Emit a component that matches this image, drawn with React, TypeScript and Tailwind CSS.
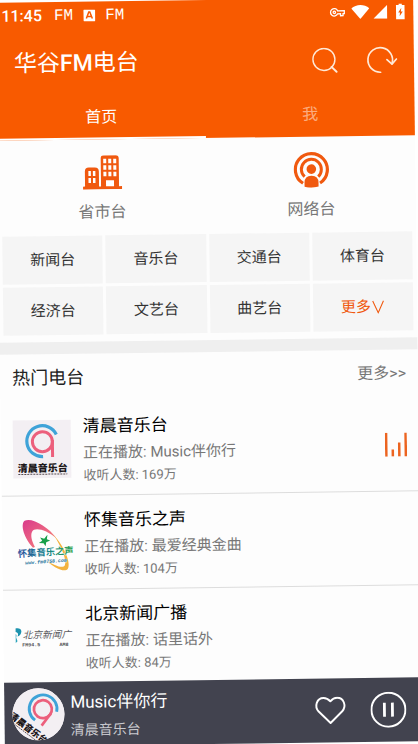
import { useState } from "react";

const CATEGORIES = ["新闻台", "音乐台", "交通台", "体育台", "经济台", "文艺台", "曲艺台"];

const STATIONS = [
  { id: "morning", name: "清晨音乐台", playing: "Music伴你行", listeners: "169万", Logo: MorningLogo },
  { id: "huaiji", name: "怀集音乐之声", playing: "最爱经典金曲", listeners: "104万", Logo: HuaijiLogo },
  { id: "beijing", name: "北京新闻广播", playing: "话里话外", listeners: "84万", Logo: BeijingLogo },
];

function MorningLogo({ className }: { className?: string }) {
  return (
    <svg viewBox="0 0 58 58" className={className} aria-hidden="true">
      <rect x="-20" y="-20" width="98" height="98" fill="#f3eff3" />
      <path d="M43.5 14.5A15.5 15.5 0 1 0 30 36.5" fill="none" stroke="#3fa3d8" strokeWidth="3.2" />
      <circle cx="29.5" cy="21.5" r="10" fill="none" stroke="#ec5f7c" strokeWidth="3" />
      <path d="M39.5 20v17" stroke="#ec5f7c" strokeWidth="3" />
      <text x="29.5" y="51.5" fontSize="10" fontWeight="900" textAnchor="middle" fill="#1c1719" fontFamily="'Noto Sans CJK SC', sans-serif">
        清晨音乐台
      </text>
      <path d="M5 54h49" stroke="#554b50" strokeWidth="1" strokeDasharray="2 1" />
    </svg>
  );
}

function HuaijiLogo({ className }: { className?: string }) {
  return (
    <svg viewBox="0 0 174 174" className={className} overflow="visible" aria-hidden="true">
      <defs>
        <linearGradient id="hj-pink" x1="0" y1="0" x2="1" y2="1">
          <stop offset="0" stopColor="#d93a8c" />
          <stop offset="0.6" stopColor="#ee6a80" />
          <stop offset="1" stopColor="#f5a36a" />
        </linearGradient>
        <linearGradient id="hj-text" x1="0" y1="0" x2="1" y2="0">
          <stop offset="0" stopColor="#2d4f9e" />
          <stop offset="0.5" stopColor="#17808c" />
          <stop offset="1" stopColor="#2fa24a" />
        </linearGradient>
      </defs>
      <path d="M56 100C30 72 18 30 32 19C52 8 102 36 128 74C96 46 62 38 54 52C48 64 54 82 62 98Z" fill="url(#hj-pink)" />
      <path d="M118 62C152 100 170 148 160 165C150 178 116 160 92 136C124 158 146 164 151 154C158 140 142 98 118 62Z" fill="#f3b33f" />
      <path d="M78 70l12 4 10-12-2 13 10 4-12 5-2 12-6-9-14-1 10-6z" fill="#18a04a" />
      <g transform="rotate(-3 90 110)">
        <text x="10" y="124" fontSize="28" fontWeight="700" fill="url(#hj-text)" stroke="#fff" strokeWidth="2" paintOrder="stroke" fontFamily="'Noto Sans CJK SC', sans-serif">
          怀集音乐之声
        </text>
        <text x="30" y="147" fontSize="15" fontWeight="700" fontStyle="italic" fill="#22739c" stroke="#fff" strokeWidth="2" paintOrder="stroke" fontFamily="'Liberation Mono', monospace">
          www.fm0758.com
        </text>
      </g>
    </svg>
  );
}

function BeijingLogo({ className }: { className?: string }) {
  return (
    <svg viewBox="0 0 174 174" className={className} aria-hidden="true">
      <path d="M0 60c8-3 18 0 18 9 0 8-7 14-12 15 3-6 4-12-6-14z" fill="#1d93ae" />
      <path d="M0 76c4 2 4 6 2 10l4 12-6 6z" fill="#2aa3bb" />
      <text x="22" y="90" fontSize="29" fontStyle="italic" fill="#5a5a60" fontFamily="'Noto Sans CJK SC', sans-serif">
        北京新闻广
      </text>
      <text x="20" y="114" fontSize="15" fontWeight="700" fill="#4c4c50" fontFamily="'Liberation Mono', monospace">
        FM94.5
      </text>
      <text x="132" y="114" fontSize="15" fontWeight="700" fill="#4c4c50" fontFamily="'Liberation Mono', monospace">
        AM8
      </text>
    </svg>
  );
}

function StatusBar() {
  return (
    <div className="flex h-7 items-center pr-2 pl-1.5 text-white">
      <span className="text-base leading-4 font-medium">11:45</span>
      <span className="ml-3 font-['Liberation_Mono',monospace] text-base leading-4">FM</span>
      <svg viewBox="0 0 12 12" className="ml-2.5 size-3" aria-hidden="true">
        <rect width="12" height="12" rx="1" fill="#fff" />
        <path d="M3 9L5.5 2.5h1L9 9M4 7h4" fill="none" stroke="#f85a00" strokeWidth="1.5" />
      </svg>
      <span className="ml-2.5 font-['Liberation_Mono',monospace] text-base leading-4">FM</span>
      <div className="ml-auto flex items-center">
        <svg viewBox="0 0 16 10" className="mr-1.5 h-2.5 w-4" fill="none" stroke="#fff" strokeWidth="1.3" aria-hidden="true">
          <path d="M8.3 3.5H15v3h-1.3v2h-2.500v-2H8.300A3.700 3.700 0 1 1 8.300 3.500z" />
          <circle cx="5" cy="5" r="1.2" />
        </svg>
        <svg viewBox="0 0 18 14" className="mr-1 h-3.5 w-4.5" fill="#fff" aria-hidden="true">
          <path d="M9 14L0 3.500C5-1 13-1 18 3.500z" />
        </svg>
        <svg viewBox="0 0 13 13" className="mr-2 size-3.5" fill="#fff" aria-hidden="true">
          <path d="M13 0v13H0z" />
        </svg>
        <svg viewBox="0 0 9 15" className="h-4 w-2.5" aria-hidden="true">
          <path d="M3 0h3v1.500h2.500V15h-8V1.500H3z" fill="#fff" />
          <path d="M5.500 4L2.500 8.500h1.700L3.800 12l3-4.500H5z" fill="#f85a00" />
        </svg>
      </div>
    </div>
  );
}

function BuildingIcon() {
  return (
    <svg viewBox="0 0 39 34" className="h-8.5 w-10" aria-hidden="true">
      <path d="M0 31h2V16q0-4 4-4h6q4 0 4 4v15h2V3q0-3 3-3h12q3 0 3 3v28h3v3H0z" fill="#f0590f" />
      <path
        d="M5.500 15.500h2.500v5H5.500zM10 15.500h2.500v5H10zM5.500 22.500h2.500v5H5.500zM10 22.500h2.500v5H10zM20.500 3.500h3v4.500h-3zM25.500 3.500h3v4.500h-3zM30.500 3.500h3v4.500h-3zM20.500 10h3v4.500h-3zM25.500 10h3v4.500h-3zM30.500 10h3v4.500h-3zM20.500 16.500h3v4.500h-3zM25.500 16.500h3v4.500h-3zM30.500 16.500h3v4.500h-3zM23 25h8v6h-8z"
        fill="#fff"
      />
    </svg>
  );
}

function PodcastIcon() {
  return (
    <svg viewBox="0 0 36 36" className="size-9" fill="none" stroke="#f0590f" aria-hidden="true">
      <path d="M9.500 31.500A16 16 0 1 1 26.500 31.500" strokeWidth="3.200" />
      <path d="M11.200 25A10 10 0 1 1 24.800 25" strokeWidth="3" />
      <circle cx="18" cy="17.500" r="4.800" fill="#f0590f" stroke="none" />
      <path d="M11 35v-4q0-7 7-7t7 7v4q-7 2-14 0z" fill="#f0590f" stroke="none" />
    </svg>
  );
}

export default function App() {
  const [tab, setTab] = useState<"home" | "me">("home");

  return (
    <div className="h-screen overflow-hidden bg-white">
      <div className="flex h-full -rotate-[0.75deg] flex-col bg-[#fdfdfd] font-[Roboto,'Noto_Sans_CJK_SC',sans-serif]">
        <header className="shrink-0 bg-[#f85a00]">
          <StatusBar />
          <div className="flex h-17 items-center px-4 text-white">
            <h1 className="ml-0.5 text-[23px] leading-8">
              华谷<span className="font-medium">FM</span>电台
            </h1>
            <button aria-label="搜索" className="ml-auto">
              <svg viewBox="0 0 26 26" className="size-6.5" fill="none" stroke="#ffe9d6" aria-hidden="true">
                <circle cx="12" cy="12" r="11" strokeWidth="1.400" />
                <path d="M19.500 19.500l5 5" strokeWidth="2" strokeLinecap="round" />
              </svg>
            </button>
            <button aria-label="刷新" className="ml-7">
              <svg viewBox="0 0 31 28" className="h-7 w-8" fill="none" stroke="#ffe9d6" strokeWidth="1.700" strokeLinecap="round" strokeLinejoin="round" aria-hidden="true">
                <path d="M14 26.500A12.300 12.300 0 1 1 25.500 18" />
                <path d="M20.500 14l5 4.500 4.500-5" />
              </svg>
            </button>
          </div>
          <nav className="grid h-[42px] grid-cols-2 text-base text-white">
            <button
              onClick={() => setTab("home")}
              className={tab === "home" ? "border-b-2 border-white" : "border-b-2 border-transparent text-white/50"}
            >
              首页
            </button>
            <button
              onClick={() => setTab("me")}
              className={tab === "me" ? "border-b-2 border-white" : "border-b-2 border-transparent text-white/50"}
            >
              我
            </button>
          </nav>
        </header>

        <main className="min-h-0 flex-1 overflow-hidden">
          <div className="grid grid-cols-2 pt-[15px] pb-[11px] text-base leading-6 text-[#777]">
            <button className="flex flex-col items-center gap-2.5">
              <span className="flex h-9 items-center">
                <BuildingIcon />
              </span>
              省市台
            </button>
            <button className="flex flex-col items-center gap-2.5">
              <PodcastIcon />
              网络台
            </button>
          </div>

          <div className="grid grid-cols-4 gap-[3px] px-1 pb-[7px] text-[15px] text-[#333]">
            {CATEGORIES.map((c) => (
              <button key={c} className="h-12 bg-[#f5f5f5]">
                {c}
              </button>
            ))}
            <button className="flex h-12 items-center justify-center bg-[#f5f5f5] text-[#f0590f]">
              更多
              <svg viewBox="0 0 13 13" className="size-3.5" fill="none" stroke="currentColor" aria-hidden="true">
                <path d="M1.500 1l5 11 5-11" />
              </svg>
            </button>
          </div>

          <section className="border-t-12 border-[#efefef]">
            <div className="flex h-12 items-center justify-between px-3">
              <h2 className="text-lg text-[#222]">热门电台</h2>
              <a href="#more" className="text-base text-[#777]">
                更多&gt;&gt;
              </a>
            </div>
            <ul>
              {STATIONS.map(({ id, name, playing, listeners, Logo }, i) => (
                <li key={id} className="flex h-[94px] items-center border-b border-[#ddd] pr-3 pl-3">
                  <Logo className="size-[58px] shrink-0" />
                  <div className="ml-3">
                    <h3 className="text-[17px] leading-7 text-black">{name}</h3>
                    <p className="text-[15px] leading-[26px] text-[#777]">正在播放: {playing}</p>
                    <p className="text-[13px] leading-5 text-[#777]">收听人数: {listeners}</p>
                  </div>
                  {i === 0 && (
                    <svg viewBox="0 0 22 24" className="ml-auto h-6 w-5.5" fill="#ec6420" aria-hidden="true">
                      <path d="M0 0h2.500v24H0zM6.500 17H9v7H6.500zM13 10h2.500v14H13zM19.500 0H22v24h-2.500z" />
                    </svg>
                  )}
                </li>
              ))}
            </ul>
          </section>
        </main>

        <footer className="flex h-16 shrink-0 items-center bg-[#42434f] pr-4 pl-2">
          <span className="size-13 shrink-0 overflow-hidden rounded-full bg-[#f3eff3]">
            <MorningLogo className="size-full rotate-[38deg] overflow-visible" />
          </span>
          <div className="ml-1.5 pt-1">
            <p className="text-[17px] leading-7 text-white">Music伴你行</p>
            <p className="text-sm leading-7 text-[#c9c9ce]">清晨音乐台</p>
          </div>
          <button aria-label="收藏" className="ml-auto">
            <svg viewBox="0 0 32 29" className="h-7 w-8" fill="none" stroke="#fff" strokeWidth="2" strokeLinejoin="round" aria-hidden="true">
              <path d="M16 27.500L3.800 15.500C-1 10 2 1.500 9 1.500c3 0 5 1.300 7 3.500 2-2.200 4-3.500 7-3.500 7 0 10 8.500 5.200 14z" />
            </svg>
          </button>
          <button aria-label="暂停" className="ml-6">
            <svg viewBox="0 0 36 36" className="size-9" fill="none" stroke="#fff" aria-hidden="true">
              <circle cx="18" cy="18" r="17" strokeWidth="2" />
              <path d="M14 11v14M22 11v14" strokeWidth="2.800" />
            </svg>
          </button>
        </footer>
      </div>
    </div>
  );
}
